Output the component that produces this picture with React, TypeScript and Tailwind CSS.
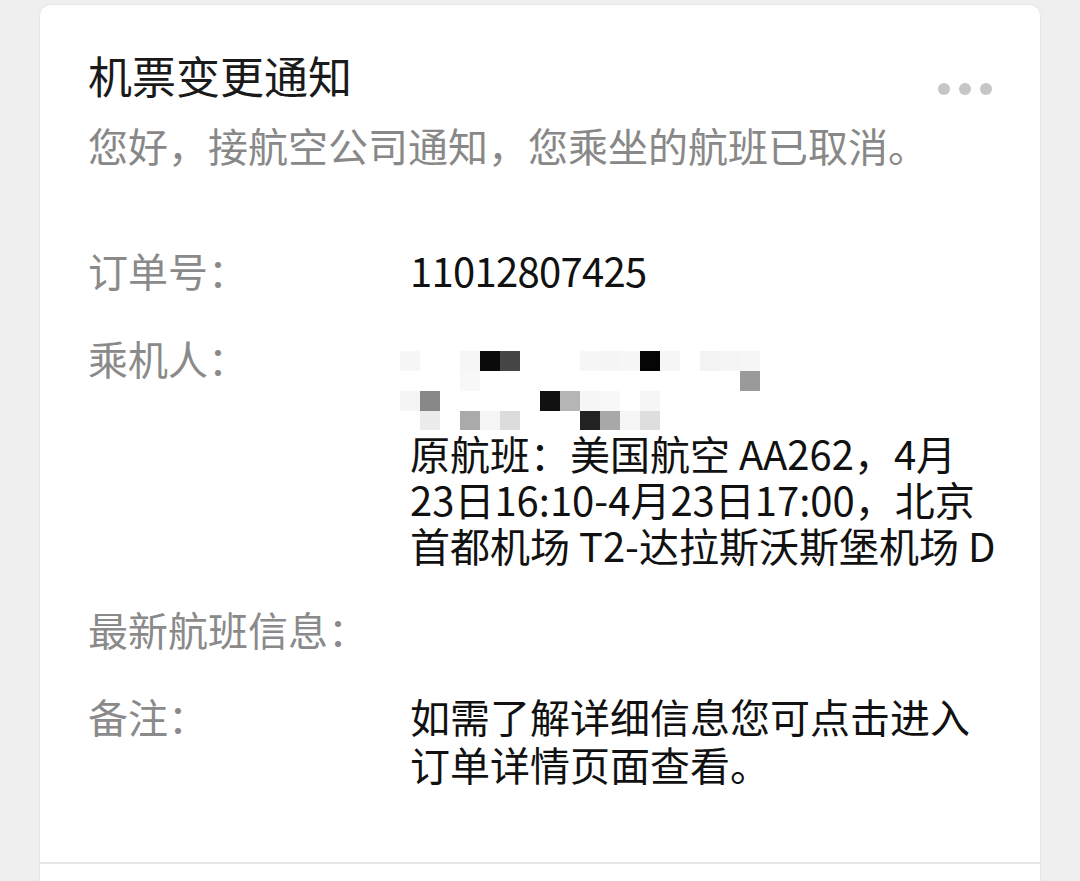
const cells: [number, number, string][] = [
  // [x, y, colour], absolute page coords of the pixelated name
  [400, 350, '#f7f7f7'],
  [460, 350, '#f6f6f6'],
  [480, 350, '#0a0a0a'],
  [500, 350, '#454545'],
  [580, 350, '#f7f7f7'],
  [600, 350, '#f5f5f5'],
  [620, 350, '#f7f7f7'],
  [640, 350, '#050505'],
  [660, 350, '#f6f6f6'],
  [700, 350, '#f3f3f3'],
  [720, 350, '#f5f5f5'],
  [740, 350, '#f6f6f6'],
  [460, 370, '#f8f8f8'],
  [740, 370, '#9a9a9a'],
  [400, 390, '#f5f5f5'],
  [420, 390, '#888888'],
  [540, 390, '#111111'],
  [560, 390, '#b5b5b5'],
  [580, 390, '#f6f6f6'],
  [600, 390, '#f8f8f8'],
  [640, 390, '#f6f6f6'],
  [420, 410, '#ececec'],
  [460, 410, '#aaaaaa'],
  [480, 410, '#f6f6f6'],
  [500, 410, '#dcdcdc'],
  [580, 410, '#222222'],
  [600, 410, '#a8a8a8'],
  [620, 410, '#f6f6f6'],
  [640, 410, '#dedede'],
];

const Mosaic = () => (
  <svg width="370" height="96" viewBox="400 333 370 96" className="-ml-[10px] block">
    {cells.map(([x, y, c]) => (
      <rect key={`${x}-${y}`} x={x} y={y} width="20" height="20" fill={c} />
    ))}
  </svg>
);

const Row = ({ label, children, className = '' }: { label: string; children?: React.ReactNode; className?: string }) => (
  <div className={`flex ${className}`}>
    <div className="w-[322px] shrink-0 text-[40px] leading-[48px] text-[#8a8a8a]">{label}</div>
    <div className="flex-1 text-[40px] leading-[48px] text-[#111]">{children}</div>
  </div>
);

export default function App() {
  return (
    <div
      className="h-[881px] overflow-hidden bg-[#efefef] pt-[4px]"
      style={{ fontFamily: '"Noto Sans CJK SC", "Noto Sans", sans-serif' }}
    >
      <div className="mx-[39px] h-[900px] rounded-[12px] border border-[#e6e6e6] bg-white pt-[45px]">
        {/* Header */}
        <div className="flex items-center justify-between pl-[48px] pr-[48px]">
          <h1 className="text-[44px] leading-[50px] text-[#1a1a1a]">机票变更通知</h1>
          <div className="mt-[28px] flex gap-[9px]">
            <span className="h-[12px] w-[12px] rounded-full bg-[#c6c6c8]" />
            <span className="h-[12px] w-[12px] rounded-full bg-[#c6c6c8]" />
            <span className="h-[12px] w-[12px] rounded-full bg-[#c6c6c8]" />
          </div>
        </div>
        <p className="mt-[20px] pl-[48px] text-[40px] leading-[50px] text-[#888]">
          您好，接航空公司通知，您乘坐的航班已取消。
        </p>

        {/* Details */}
        <div className="mt-[76px] flex flex-col pl-[48px]">
          <Row label="订单号：">
            <span className="tracking-[-0.7px]">11012807425</span>
          </Row>
          <Row label="乘机人：" className="mt-[40px]">
            <Mosaic />
            <p className="leading-[46px] whitespace-nowrap">
              原航班：美国航空 AA262，4月
              <br />
              23日16:10-4月23日17:00，北京
              <br />
              首都机场 T2-达拉斯沃斯堡机场 D
            </p>
          </Row>
          <Row label="最新航班信息：" className="mt-[37px]" />
          <Row label="备注：" className="mt-[39px]">
            <p className="whitespace-nowrap">
              如需了解详细信息您可点击进入
              <br />
              订单详情页面查看。
            </p>
          </Row>
        </div>

        <div className="mt-[74px] h-[2px] bg-[#e6e6e6]" />
      </div>
    </div>
  );
}
